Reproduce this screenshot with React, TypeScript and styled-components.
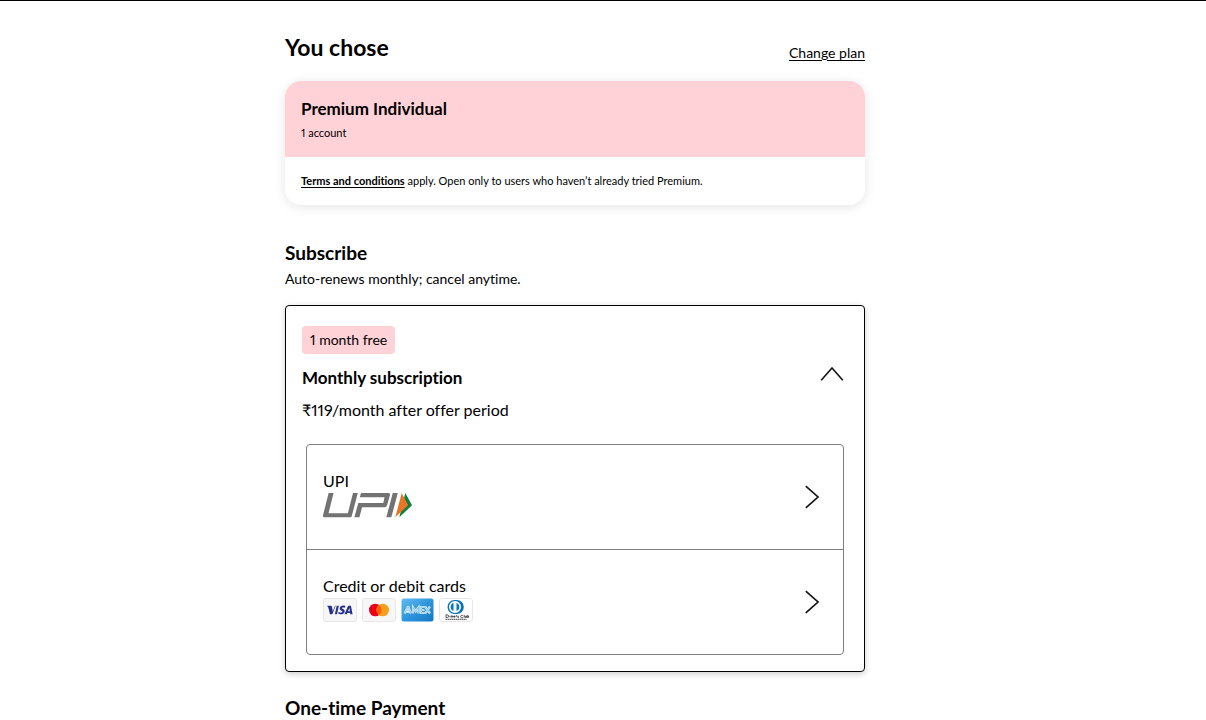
import React, { useState } from "react";
import styled, { createGlobalStyle } from "styled-components";

const GlobalStyle = createGlobalStyle`
  *, *::before, *::after { box-sizing: border-box; }
  body {
    margin: 0;
    background: #fff;
    color: #000;
    font-family: Lato, "Liberation Sans", sans-serif;
    font-size: 14px;
    line-height: 20px;
    font-variant-ligatures: none;
    font-variant-numeric: proportional-nums;
  }
  h1, h2, h3, p { margin: 0; }
  button {
    font: inherit;
    font-variant-ligatures: none;
    font-variant-numeric: proportional-nums;
    color: inherit;
    text-align: left;
    cursor: pointer;
  }
`;

const Page = styled.div`
  border-top: 1px solid #000;
  padding: 0 56px 0 0;
  overflow: hidden;
`;

const Content = styled.main`
  max-width: 580px;
  margin: 0 auto;
  padding-top: 30px;
`;

const PlanHeader = styled.header`
  display: flex;
  justify-content: space-between;
  align-items: flex-end;
  height: 32px;
  margin-bottom: 18px;
`;

const PageTitle = styled.h1`
  font-size: 23px;
  line-height: 32px;
  font-weight: 700;
`;

const TextLink = styled.a<{ $strong?: boolean }>`
  color: #000;
  font-weight: ${(p) => (p.$strong ? 700 : 400)};
  text-decoration: underline;
  text-underline-offset: 2px;
`;

const PlanCard = styled.section`
  border-radius: 16px;
  overflow: hidden;
  box-shadow: 0 2px 12px rgba(0, 0, 0, 0.1);
`;

const PlanSummary = styled.div`
  background: #ffd2d7;
  padding: 16px;
`;

const PlanName = styled.h2`
  font-size: 17px;
  line-height: 24px;
  font-weight: 700;
  margin-bottom: 4px;
`;

const SmallText = styled.p`
  font-size: 11px;
  line-height: 16px;
`;

const PlanTerms = styled.div`
  padding: 16px;
`;

const Section = styled.section`
  margin-top: 36px;
`;

const SectionTitle = styled.h2`
  font-size: 19px;
  line-height: 24px;
  font-weight: 700;
`;

const SectionText = styled.p`
  margin: 4px 0 16px;
`;

const OfferCard = styled.div`
  border: 1px solid #000;
  border-radius: 4px;
  padding: 20px 20px 16px;
  box-shadow: 0 2px 6px rgba(0, 0, 0, 0.2);
`;

const OfferToggle = styled.button`
  display: flex;
  align-items: center;
  justify-content: space-between;
  width: 100%;
  border: 0;
  background: none;
  padding: 0;
`;

const OfferDetails = styled.span`
  display: flex;
  flex-direction: column;
  align-items: flex-start;
  margin-left: -4px;
  font-size: 16px;
  line-height: 24px;
`;

const Badge = styled.span`
  background: #ffd2d7;
  border-radius: 4px;
  padding: 4px 8px;
  font-size: 14px;
  line-height: 20px;
`;

const OfferName = styled.span`
  font-size: 17px;
  font-weight: 700;
  margin: 12px 0 8px;
`;

const MethodList = styled.div`
  margin-top: 22px;
  border: 1px solid #7f7f7f;
  border-radius: 4px;
`;

const Method = styled.button`
  display: flex;
  align-items: center;
  justify-content: space-between;
  width: 100%;
  height: 104px;
  padding: 0 24px 0 16px;
  border: 0;
  background: none;

  & + & {
    height: 105px;
    border-top: 1px solid #7f7f7f;
  }
`;

const MethodInfo = styled.span`
  display: flex;
  flex-direction: column;
  font-size: 16px;
  line-height: 24px;
`;

const Logos = styled.span`
  display: flex;
  gap: 5px;
  height: 32px;
`;

const Chevron = styled.svg`
  display: block;
  flex: none;
  fill: none;
  stroke: #111;
  stroke-width: 1.6;
`;

const NextSection = styled(Section)`
  margin-top: 24px;
`;

const ChevronRight = () => (
  <Chevron width="14" height="24" viewBox="0 0 14 24" aria-hidden="true">
    <path d="M.8 1.2 13 12 .8 22.8" />
  </Chevron>
);

const ChevronVertical = ({ open }: { open: boolean }) => (
  <Chevron width="24" height="14" viewBox="0 0 24 14" aria-hidden="true">
    <path d={open ? "M1.2 13.2 12 1l10.8 12.2" : "M1.2 1 12 13.2 22.8 1"} />
  </Chevron>
);

const UpiLogo = () => (
  <svg width="90" height="26" viewBox="0 0 90 26" aria-hidden="true">
    <g fill="#737373">
      <path d="M5.600 0h5L5.500 20.200h19.400L30 0h4.800l-6.400 24.300H1.700C.2 24.300-.3 23.400.1 22Z" />
      <path d="M38 0h27c1.600 0 2.300.9 1.900 2.300l-2.800 10c-.4 1.300-1.300 2-2.500 2H39.100l-2.700 10h-5L35.300 9.900h25L61.500 4.300H36.800Z" />
      <path d="M69.800 0h5l-6.500 24.300h-5Z" />
    </g>
    <path fill="#098041" d="m82.300 0 6.700 12.300-12.700 12Z" />
    <path fill="#e97626" d="m78.700 0 6.500 12.300-12.900 12Z" />
  </svg>
);

const CardFrame = ({ fill = "#f7f7f8" }: { fill?: string }) => (
  <rect x=".5" y=".5" width="33" height="23" rx="2.500" fill={fill} stroke="#e7e7e9" />
);

const VisaLogo = () => (
  <svg width="34" height="24" viewBox="0 0 34 24" aria-hidden="true">
    <CardFrame />
    <g fill="#25308a">
      <path d="M12.700 7.700 9.300 16.200H7L5.300 9.400c-.1-.5-.5-.7-1-.9V7.700h3.600c.5 0 .9.400 1 .9l.9 4.700 2.200-5.600Z" />
      <path d="m15.800 7.700-1.800 8.500h-2.100l1.800-8.500Z" />
      <path d="M22.300 8 22 9.800c-1.300-.6-3.200-.6-3.200.3 0 .8 2.900 1 2.900 3.100 0 3-3.900 3.700-6.500 2.600l.4-1.900c1.300.8 3.800.9 3.900-.2 0-.9-2.800-1-2.800-3.200 0-2.700 3.400-3.500 5.600-2.500Z" />
      <path fillRule="evenodd" d="M27.900 7.700h-2c-.5 0-.9.200-1.100.7l-3.300 7.800h2.300l.5-1.300h2.800l.3 1.300h2.200Zm-1.500 2.400.5 3.100H25Z" />
    </g>
  </svg>
);

const MastercardLogo = () => (
  <svg width="34" height="24" viewBox="0 0 34 24" aria-hidden="true">
    <CardFrame />
    <circle cx="13.300" cy="12" r="6.300" fill="#eb001b" />
    <circle cx="20.700" cy="12" r="6.300" fill="#f79e1b" />
    <path fill="#ff5f00" d="M17 6.900a6.300 6.300 0 0 1 0 10.200 6.300 6.300 0 0 1 0-10.200Z" />
  </svg>
);

const AmexLogo = () => (
  <svg width="33" height="24" viewBox="0 0 33 24" aria-hidden="true">
    <defs>
      <linearGradient id="amex" x1="0" y1="0" x2="1" y2="1">
        <stop offset="0" stopColor="#62bdf0" />
        <stop offset=".5" stopColor="#2f96dc" />
        <stop offset="1" stopColor="#1476c4" />
      </linearGradient>
    </defs>
    <rect x=".5" y=".5" width="32" height="23" rx="2.500" fill="url(#amex)" />
    <g fill="none" stroke="#d9effc" strokeWidth="2.200">
      <path d="m3.500 15.500 3.300-6.300h.7l2.300 6.300M5 13.700h4M12 15.500V9.400l2.700 4 2.800-4v6.100M24 9h-4v6h4M20 12h3.500M24 8.500l5 7M29 8.500l-5 7" />
    </g>
    <g fill="none" stroke="#3c9bdb" strokeWidth=".5">
      <path d="m3.500 15.500 3.300-6.300h.7l2.300 6.300M12 15.500V9.400l2.700 4 2.800-4v6.100M24 9h-4v6h4M20 12h3.500M24 8.500l5 7M29 8.500l-5 7" />
    </g>
  </svg>
);

const DinersLogo = () => (
  <svg width="34" height="24" viewBox="0 0 34 24" aria-hidden="true">
    <CardFrame fill="#fff" />
    <path fill="#0874ba" fillRule="evenodd" d="M15.500 2h2.300a7 7 0 0 1 0 14h-2.300a7 7 0 0 1 0-14Zm.5 1a6 6 0 1 0 0 12 6 6 0 0 0 0-12Z" />
    <path fill="#0874ba" d="M14.500 5.100v7.800a4.100 4.100 0 0 1 0-7.800ZM17.500 5.100a4.100 4.100 0 0 1 0 7.800Z" />
    <path
      fill="none"
      stroke="#292b32"
      strokeWidth=".8"
      d="M7 16.800v2.700h1.200c2 0 2-2.700 0-2.700Zm4 1v1.700m1.500 0v-1.700l1.200.2v1.500m1-1h1.200l-.8-.7-.4 1.200 1.300.3m1-.1v-1.400h1m.5 1.800h1l-.8-1.500h1m4-.6c-2.300-1-3.200 2.300-.5 2.300l1-.4m1-2.500v2.700m1-1.700v1.500h1.200v-1.500m.8-1v2.500h1.400v-1.500h-1"
    />
    <path stroke="#555962" strokeWidth="1.200" strokeDasharray="1.400 .6" d="M6.500 21.300h21" />
  </svg>
);

export default function App() {
  const [open, setOpen] = useState(true);

  return (
    <>
      <GlobalStyle />
      <Page>
        <Content>
          <PlanHeader>
            <PageTitle>You chose</PageTitle>
            <TextLink href="#plans">Change plan</TextLink>
          </PlanHeader>

          <PlanCard>
            <PlanSummary>
              <PlanName>Premium Individual</PlanName>
              <SmallText>1 account</SmallText>
            </PlanSummary>
            <PlanTerms>
              <SmallText>
                <TextLink href="#terms" $strong>
                  Terms and conditions
                </TextLink>{" "}
                apply. Open only to users who haven’t already tried Premium.
              </SmallText>
            </PlanTerms>
          </PlanCard>

          <Section>
            <SectionTitle>Subscribe</SectionTitle>
            <SectionText>Auto-renews monthly; cancel anytime.</SectionText>
            <OfferCard>
              <OfferToggle type="button" aria-expanded={open} onClick={() => setOpen(!open)}>
                <OfferDetails>
                  <Badge>1 month free</Badge>
                  <OfferName>Monthly subscription</OfferName>
                  <span>₹119/month after offer period</span>
                </OfferDetails>
                <ChevronVertical open={open} />
              </OfferToggle>
              {open && (
                <MethodList>
                  <Method type="button">
                    <MethodInfo>
                      UPI
                      <Logos>
                        <UpiLogo />
                      </Logos>
                    </MethodInfo>
                    <ChevronRight />
                  </Method>
                  <Method type="button">
                    <MethodInfo>
                      Credit or debit cards
                      <Logos>
                        <VisaLogo />
                        <MastercardLogo />
                        <AmexLogo />
                        <DinersLogo />
                      </Logos>
                    </MethodInfo>
                    <ChevronRight />
                  </Method>
                </MethodList>
              )}
            </OfferCard>
          </Section>

          <NextSection>
            <SectionTitle>One-time Payment</SectionTitle>
          </NextSection>
        </Content>
      </Page>
    </>
  );
}
